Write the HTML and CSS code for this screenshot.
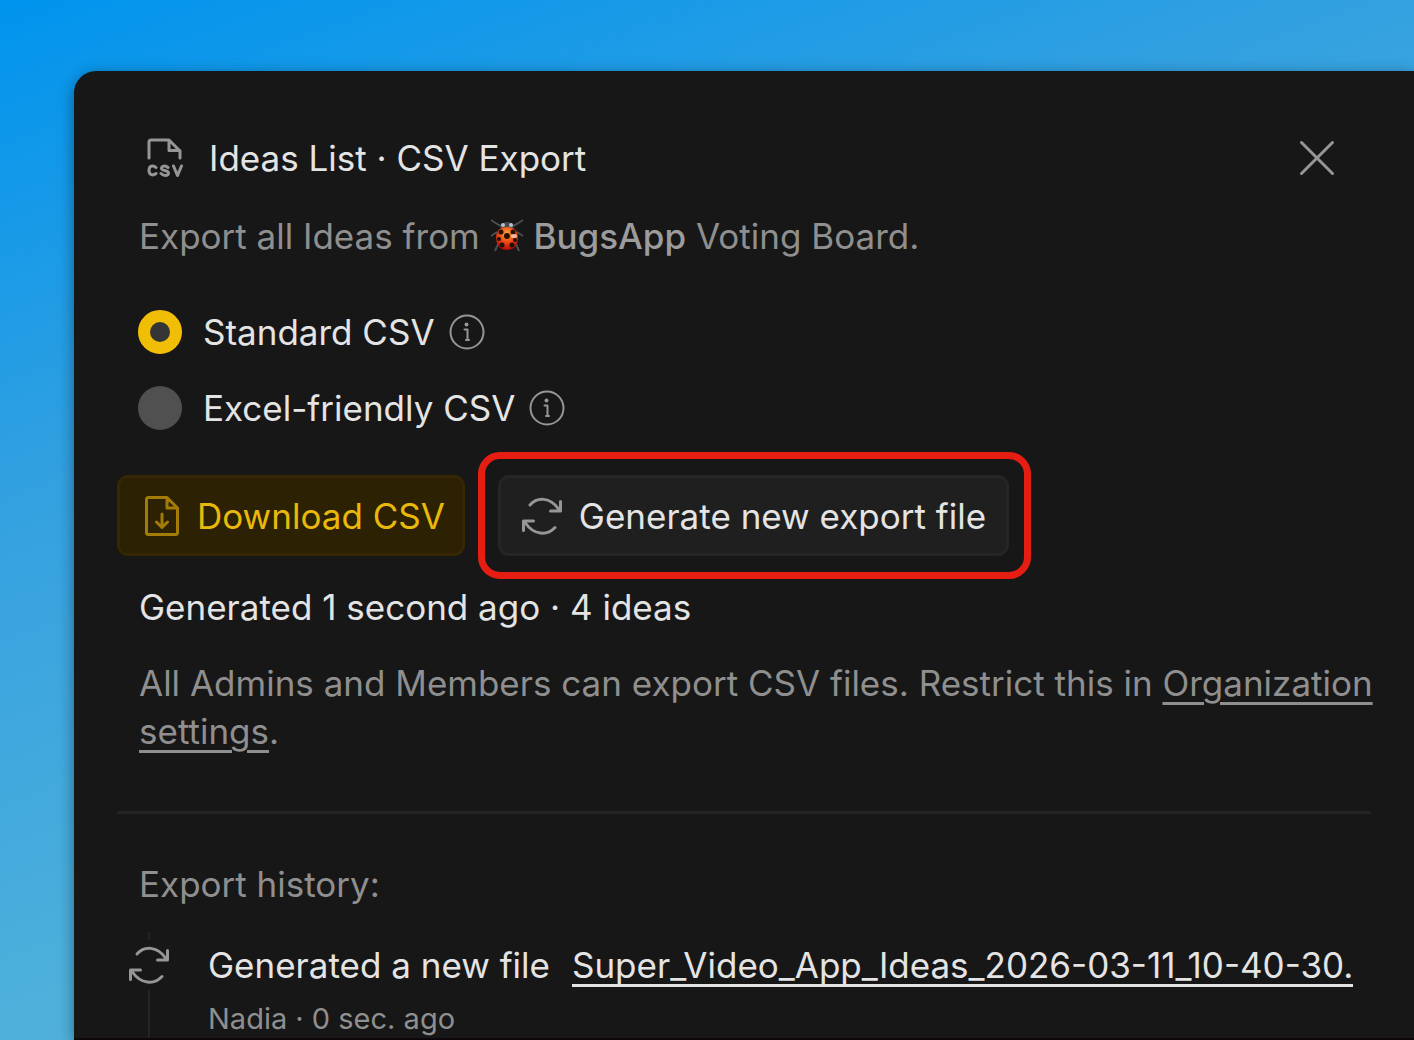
FILE: index.html
```html
<!DOCTYPE html>
<html lang="en">
<head>
    <meta charset="UTF-8">
    <meta name="viewport" content="width=device-width, initial-scale=1.0">
    <title>Ideas List · CSV Export</title>
    <link rel="stylesheet" href="styles.css">
</head>
<body>
    <svg class="sprite" aria-hidden="true">
        <symbol id="refresh" viewBox="0 0 42 40">
            <path d="M9 9C16 1 29 .5 38 13.500M39.500 5.500V15H29.500M2.500 34.500V25H12.500M4 26.500C13 39.500 26 40 34 31.500"/>
        </symbol>
        <symbol id="info" viewBox="0 0 36 36">
            <circle cx="18" cy="18" r="16.500"/>
            <path d="M15.500 15.500H18.500V26M17 26H20"/>
            <circle class="dot" cx="17.500" cy="10.500" r="2"/>
        </symbol>
    </svg>

    <main class="panel">
        <header class="header">
            <svg class="icon icon-csv" viewBox="0 0 36 40" aria-hidden="true">
                <path d="M2 20V4q0-2 2-2H22L33 13V20M22 2V12.500H33"/>
                <path d="M9 29.500C6 26.500 2 28 2 32.500S6 38 9 35.500M21 29.500C18 27 14.500 28 14.500 30.500S21.500 32 21.500 35S17 38.500 14 35.500M26.500 28L30.500 37.500L34.500 28"/>
            </svg>
            <h1>Ideas List · CSV Export</h1>
            <button class="close" type="button" aria-label="Close">
                <svg class="icon" viewBox="0 0 36 36" aria-hidden="true"><path d="M2.500 2.500L33.500 33.500M33.500 2.500L2.500 33.500"/></svg>
            </button>
        </header>

        <p class="description">
            Export all Ideas from
            <svg class="bug" viewBox="0 0 34 34" role="img" aria-label="Ladybug">
                <defs>
                    <radialGradient id="shell" cx=".5" cy=".3" r=".7">
                        <stop offset="0" stop-color="#ffab32"/>
                        <stop offset=".5" stop-color="#ee4b18"/>
                        <stop offset="1" stop-color="#a90b05"/>
                    </radialGradient>
                </defs>
                <path class="legs" d="M11 7L7 5L1 1M23 7L27 5L33 1M7 13L1 17M27 13L33 17M8 25L5 32M26 25L29 32"/>
                <path d="M10 9Q11 3 17 3T24 9z" fill="#454b50"/>
                <circle cx="13" cy="6" r="2" fill="#b9c2c7"/>
                <circle cx="21" cy="6" r="2" fill="#b9c2c7"/>
                <path d="M6 17Q7 8 17 8T28 17Q28 31 17 31T6 17z" fill="url(#shell)"/>
                <g fill="#251006">
                    <circle cx="17" cy="17" r="3"/>
                    <circle cx="11" cy="13" r="2.500"/>
                    <circle cx="23" cy="13" r="2.500"/>
                    <circle cx="9" cy="20" r="2"/>
                    <circle cx="25" cy="21" r="2"/>
                    <circle cx="12" cy="26" r="2.500"/>
                    <circle cx="22" cy="26" r="2.500"/>
                </g>
                <ellipse cx="24" cy="17" rx="3" ry="2" fill="#ffd9c4" opacity=".75"/>
            </svg>
            <strong>BugsApp</strong> Voting Board.
        </p>

        <form class="formats">
            <div class="format">
                <input type="radio" name="format" id="standard" checked>
                <label for="standard">Standard CSV</label>
                <svg class="icon icon-info"><use href="#info"/></svg>
            </div>
            <div class="format">
                <input type="radio" name="format" id="excel">
                <label for="excel">Excel-friendly CSV</label>
                <svg class="icon icon-info"><use href="#info"/></svg>
            </div>
        </form>

        <div class="actions">
            <button class="btn btn-download" type="button">
                <svg class="icon icon-file" viewBox="0 0 34 40" aria-hidden="true">
                    <path d="M4 1.500H22L32.500 12V36.500q0 2-2 2H3.500q-2 0-2-2V3.500q0-2 2-2M22 1.500V12H32.500M17 18V31M11.500 26L17 31.500L22.500 26"/>
                </svg>
                Download CSV
            </button>
            <div class="highlight">
                <button class="btn btn-generate" type="button">
                    <svg class="icon icon-refresh"><use href="#refresh"/></svg>
                    Generate new export file
                </button>
            </div>
        </div>

        <p class="status">Generated 1 second ago · 4 ideas</p>
        <p class="note">All Admins and Members can export CSV files. Restrict this in <a href="#">Organization settings</a>.</p>

        <hr>

        <section class="history">
            <h2>Export history:</h2>
            <div class="event">
                <div class="timeline">
                    <svg class="icon icon-refresh"><use href="#refresh"/></svg>
                </div>
                <div class="event-body">
                    <div class="event-title">
                        <span>Generated a new file</span>
                        <a href="#">Super_Video_App_Ideas_2026-03-11_10-40-30.</a>
                    </div>
                    <p class="event-meta">Nadia · 0 sec. ago</p>
                </div>
            </div>
        </section>
    </main>
</body>
</html>
```
FILE: styles.css
```css
* {
    margin: 0;
    padding: 0;
    box-sizing: border-box;
}
body {
    display: flex;
    height: 100vh;
    padding: 71px 0 0 74px;
    overflow: hidden;
    background: linear-gradient(160deg, #0094ee 0%, #34a1e0 33%, #4fb1db 67%);
    font-family: Inter, "Liberation Sans", sans-serif;
    font-size: 35px;
    line-height: 48px;
    color: #e4e4e4;
}
button {
    font: inherit;
    color: inherit;
    border: none;
    background: none;
    cursor: pointer;
}
a {
    color: inherit;
    text-decoration-thickness: 3px;
    text-underline-offset: 6px;
}
h1, h2 {
    font-size: inherit;
    font-weight: 400;
}
.sprite {
    position: absolute;
    width: 0;
    height: 0;
}
.panel {
    flex: 1;
    min-width: 0;
    padding: 63px 43px 0;
    overflow: hidden;
    background: #171717;
    border-bottom: 2px solid #0d070c;
    border-top-left-radius: 22px;
    box-shadow: 0 4px 16px rgba(0, 0, 0, 0.4);
}
.icon {
    flex: none;
    fill: none;
    stroke: #969696;
    stroke-width: 3;
    stroke-linecap: round;
    stroke-linejoin: round;
}
.header {
    display: flex;
    align-items: center;
    padding: 0 36px 0 30px;
}
.icon-csv {
    width: 36px;
    height: 40px;
    margin-right: 26px;
}
.close {
    width: 36px;
    height: 36px;
    margin-left: auto;
}
.close .icon {
    display: block;
}
.description, .note, .history h2 {
    color: #8f8f8f;
}
.description {
    margin-top: 30px;
    padding: 0 22px;
}
.description strong {
    font-weight: 500;
    color: #9c9c9c;
}
.bug {
    width: 34px;
    height: 34px;
    vertical-align: -4px;
}
.legs {
    fill: none;
    stroke: #474d50;
    stroke-width: 2;
}
.formats {
    display: grid;
    gap: 28px;
    margin-top: 48px;
    padding: 0 21px;
}
.format {
    display: flex;
    align-items: center;
}
.format input {
    appearance: none;
    width: 44px;
    height: 44px;
    margin-right: 21px;
    border-radius: 50%;
    background: #505050;
}
.format input:checked {
    border: 12px solid #f0be05;
    background: #353535;
}
.icon-info {
    width: 36px;
    height: 36px;
    margin-left: 14px;
    stroke-width: 2;
}
.dot {
    fill: #969696;
    stroke: none;
}
.actions {
    display: flex;
    gap: 33px;
    margin-top: 43px;
}
.btn {
    display: flex;
    align-items: center;
    gap: 16px;
    height: 81px;
    padding: 0 20px;
    border: 3px solid;
    border-radius: 11px;
    white-space: nowrap;
}
.btn-download {
    gap: 18px;
    padding: 0 17px 0 25px;
    color: #e8b90a;
    background: #2c2102;
    border-color: #352703;
}
.btn-generate {
    background: #1f1f1f;
    border-color: #252525;
}
.icon-file {
    width: 34px;
    height: 40px;
    stroke: #a37c05;
}
.icon-refresh {
    width: 42px;
    height: 40px;
}
.highlight {
    position: relative;
}
.highlight::after {
    content: "";
    position: absolute;
    inset: -23px -22px -23px -20px;
    border: 7px solid #e61d12;
    border-radius: 22px;
    pointer-events: none;
}
.status {
    margin-top: 27px;
    padding: 0 22px;
}
.note {
    margin: 28px -8px 0 0;
    padding-left: 22px;
}
hr {
    height: 3px;
    margin: 56px 0 46px;
    border: none;
    background: #242424;
}
.history h2 {
    padding-left: 22px;
}
.event {
    display: flex;
    gap: 38px;
    margin-top: 24px;
    padding: 0 18px 0 11px;
}
.timeline {
    display: flex;
    flex-direction: column;
    align-items: center;
    gap: 5px;
}
.timeline::before, .timeline::after {
    content: "";
    width: 2px;
    height: 8px;
    background: #242424;
}
.timeline::after {
    flex: 1;
}
.event-body {
    flex: 1;
    min-width: 0;
    padding: 9px 0 32px;
}
.event-title {
    display: flex;
    gap: 22px;
    white-space: nowrap;
}
.event-title a {
    overflow: hidden;
    text-decoration-skip-ink: none;
}
.event-meta {
    margin-top: 12px;
    font-size: 29px;
    line-height: 36px;
    color: #8f8f8f;
}
```
